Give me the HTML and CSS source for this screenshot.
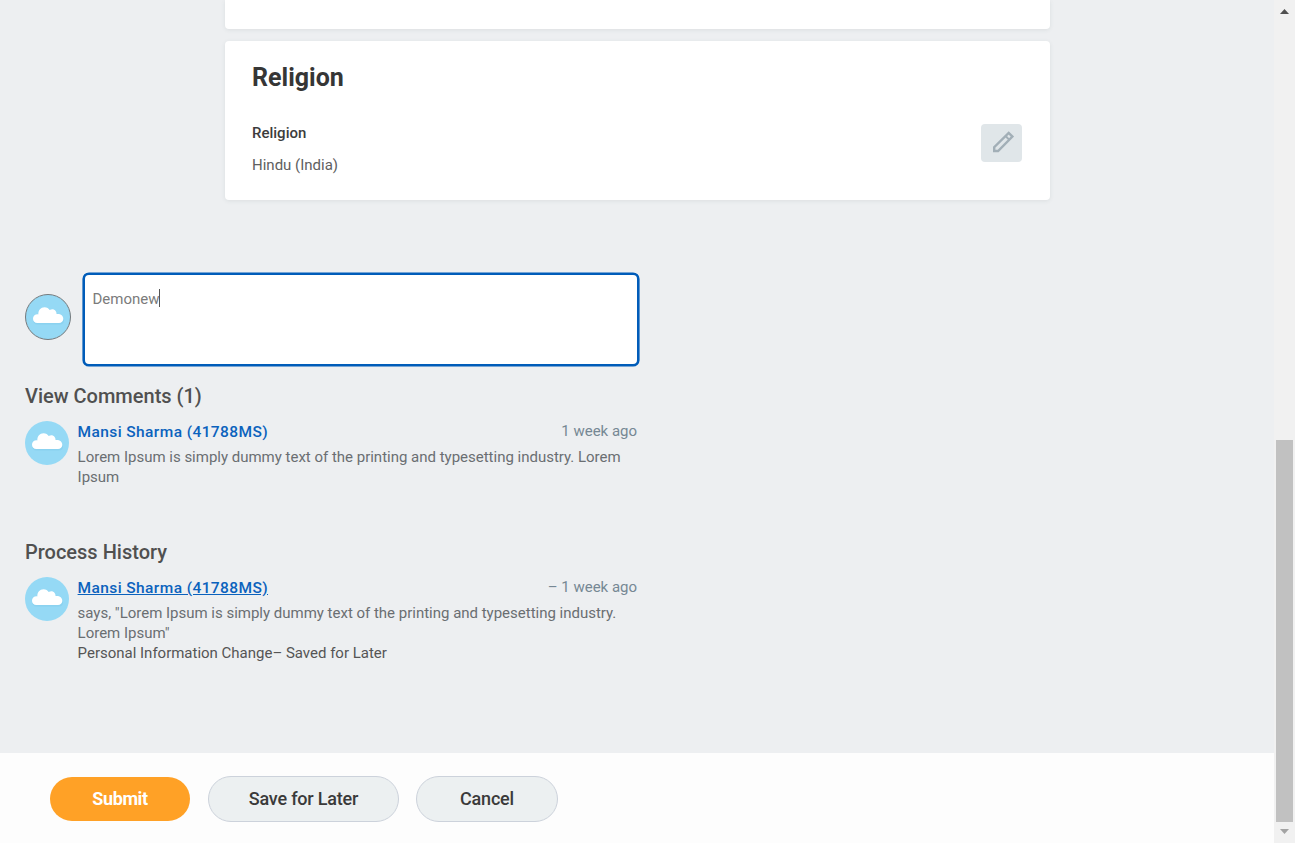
FILE: index.html
```html
<!DOCTYPE html>
<html lang="en">
<head>
<meta charset="utf-8">
<title>Personal Information Change</title>
<link rel="stylesheet" href="styles.css">
</head>
<body>
<svg width="0" height="0" class="defs" aria-hidden="true">
  <symbol id="cloud" viewBox="0 0 44 44">
    <path class="cloud-shade" d="M11.500 29.500C8.800 29.500 7.500 28 7.500 25.500C7.500 22 10 20 12.500 20.500C13 15 16 13.500 19 13.500C22 13.500 23.500 15 24 16.500C28 14 31 17 31.500 20.500C35 20.500 38 22.500 38 26C38 28.500 36 29.500 33.500 29.500Z"/>
    <path class="cloud-body" d="M11.300 28C8.800 28 7 26.200 7 23.800C7 21.400 9 19.100 12.300 19.400C12.200 15.200 14.800 12.200 18.500 12.200C21 12.200 22.700 13.300 23.700 15.100C26.900 12.600 30.900 15.300 30.600 19.100C34.600 18.700 37.300 20.700 37.300 24C37.300 26.300 35.500 28 33 28Z"/>
  </symbol>
</svg>
<div class="window">
  <div class="page">
    <main class="content">
      <section class="card card-previous"></section>
      <section class="card card-religion">
        <div class="card-text">
          <h2>Religion</h2>
          <div class="label">Religion</div>
          <div class="value">Hindu (India)</div>
        </div>
        <button class="edit" aria-label="Edit">
          <svg width="24" height="24" viewBox="0 0 24 24" fill="none" stroke="#a2afb7" stroke-width="2.400"><path d="M3.200 21V17.200L17.700 2.900L21.400 6.600L7.100 21Z"/><path d="M14.500 6L18.400 9.900" stroke-width="2"/></svg>
        </button>
      </section>

      <section class="compose">
        <div class="avatar avatar-outlined"><svg><use href="#cloud"/></svg></div>
        <div class="comment-box"><span>Demonew</span><i class="caret"></i></div>
      </section>

      <section class="thread comments">
        <h3>View Comments (1)</h3>
        <article class="entry">
          <div class="avatar"><svg><use href="#cloud"/></svg></div>
          <div class="entry-body">
            <header><a class="name">Mansi Sharma (41788MS)</a><time>1 week ago</time></header>
            <p>Lorem Ipsum is simply dummy text of the printing and typesetting industry. Lorem Ipsum</p>
          </div>
        </article>
      </section>

      <section class="thread">
        <h3>Process History</h3>
        <article class="entry">
          <div class="avatar"><svg><use href="#cloud"/></svg></div>
          <div class="entry-body">
            <header><a class="name underlined">Mansi Sharma (41788MS)</a><time>– 1 week ago</time></header>
            <p>says, "Lorem Ipsum is simply dummy text of the printing and typesetting industry. Lorem Ipsum"</p>
            <p class="status">Personal Information Change– Saved for Later</p>
          </div>
        </article>
      </section>
    </main>
    <footer class="actions">
      <button class="btn submit">Submit</button>
      <button class="btn save">Save for Later</button>
      <button class="btn cancel">Cancel</button>
    </footer>
  </div>
  <div class="scrollbar">
    <svg width="9" height="5" viewBox="0 0 9 5"><path d="M0 5L4.500 0L9 5Z" fill="#505050"/></svg>
    <div class="thumb"></div>
    <svg width="9" height="5" viewBox="0 0 9 5"><path d="M0 0L4.500 5L9 0Z" fill="#a3a3a3"/></svg>
  </div>
</div>
</body>
</html>
```
FILE: styles.css
```css
* { box-sizing: border-box; }
body { margin: 0; overflow: hidden; font-family: Roboto, "Liberation Sans", sans-serif; }
h2, h3, p { margin: 0; }
button { padding: 0; border: 0; font-family: inherit; }
svg { display: block; }
.defs { display: none; }

.window { display: flex; width: 1295px; height: 843px; background: #edeff1; }
.page { flex: 1; display: flex; flex-direction: column; }
.content { flex: 1; min-height: 0; }

.card { width: 825px; margin-left: 225px; background: #fff; box-shadow: 0 1px 4px rgba(70, 90, 90, 0.1); }
.card-previous { height: 29px; border-radius: 0 0 4px 4px; }
.card-religion { display: flex; justify-content: space-between; height: 159px; margin-top: 12px; padding: 22px 28px 0 27px; border-radius: 4px; }
.card h2 { font-size: 25px; line-height: 30px; font-weight: 700; color: #363636; }
.label { margin-top: 30px; font-size: 15px; line-height: 20px; font-weight: 500; color: #3c3c3c; }
.value { margin-top: 12px; font-size: 15px; line-height: 20px; color: #606060; }
.edit { display: flex; align-items: center; justify-content: center; width: 41px; height: 38px; margin-top: 61px; padding: 0 0 2px 2px; border-radius: 4px; background: #e0e6e9; }

.compose { display: flex; align-items: center; gap: 12px; margin: 73px 0 0 25px; }
.avatar { flex: none; display: flex; align-items: center; justify-content: center; width: 44px; height: 44px; border-radius: 50%; background: #95d9f5; }
.avatar svg { width: 44px; height: 44px; flex: none; }
.avatar-outlined { width: 46px; height: 46px; margin-top: -5px; border: 1px solid #757a7d; }
.cloud-body { fill: #fff; }
.cloud-shade { fill: #82cceb; opacity: 0.5; }
.comment-box { display: flex; align-items: flex-start; width: 556px; height: 93px; padding: 14px 7.500px; border: 2px solid #005cb9; border-radius: 6px; box-shadow: 0 0 0 0.600px #005cb9; background: #fff; font-size: 15px; line-height: 20px; color: #7b7b7b; }
.caret { width: 1px; height: 18px; margin-left: -1px; background: #555; }

.thread { width: 612px; margin-left: 25px; }
.comments { height: 156px; margin-top: 17px; }
.thread h3 { font-size: 20px; line-height: 26px; font-weight: 500; color: #505050; }
.entry { display: flex; gap: 8.600px; margin-top: 12px; }
.entry-body { flex: 1; font-size: 15px; line-height: 20px; color: #6a6e72; letter-spacing: -0.008px; }
.entry header { display: flex; justify-content: space-between; height: 26px; }
.name { font-weight: 500; color: #0b62bd; font-size: 15.500px; line-height: 22px; letter-spacing: 0.400px; }
.underlined { text-decoration: underline; }
time { color: #768894; }
.status { color: #555; }

.actions { flex: none; display: flex; align-items: flex-start; height: 90px; padding: 23px 0 0 50px; background: #fdfdfd; }
.btn { font-size: 18px; line-height: 22px; font-weight: 500; border-radius: 24px; color: #3a3a3a; letter-spacing: -0.2px; }
.submit { width: 140px; height: 44px; margin-top: 1px; background: #ffa126; color: #fff; font-weight: 700; letter-spacing: -0.4px; }
.save, .cancel { height: 46px; border: 1px solid #ccd2db; background: #ecf0f1; }
.save { width: 191px; margin-left: 18px; }
.cancel { width: 142px; margin-left: 17px; }

.scrollbar { display: flex; flex-direction: column; align-items: center; width: 21px; padding: 9px 0 9px; background: #f1f1f1; }
.thumb { width: 17px; height: 382px; margin: auto 0 7px; background: #c1c1c1; }
```
